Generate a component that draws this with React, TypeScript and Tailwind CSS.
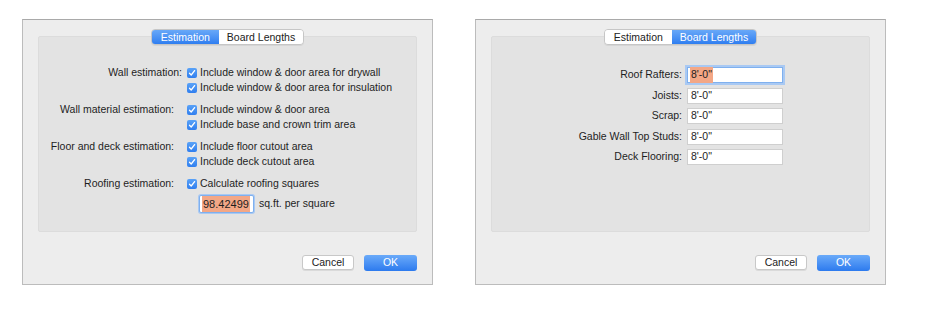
import type { ReactNode } from 'react';

const font = { fontFamily: '"Liberation Sans", Arial, sans-serif' };

function Check() {
  return (
    <span className="flex h-[10px] w-[10px] shrink-0 items-center justify-center rounded-[2px] bg-gradient-to-b from-[#5aa2f7] to-[#2f7eef]">
      <svg width="8" height="8" viewBox="0 0 8 8" fill="none">
        <path d="M1.5 4.3 L3.2 6 L6.6 1.6" stroke="white" strokeWidth="1.3" strokeLinecap="round" strokeLinejoin="round" />
      </svg>
    </span>
  );
}

function Option({ children }: { children: ReactNode }) {
  return (
    <div className="flex h-[15px] items-center gap-[3px]">
      <Check />
      <span>{children}</span>
    </div>
  );
}

function Tabs({ active }: { active: 0 | 1 }) {
  const on = 'bg-gradient-to-b from-[#68a8f8] to-[#2f7ef0] text-white';
  const off = 'bg-white text-[#222]';
  return (
    <div className="-mt-[8px] flex justify-center">
      <div className="flex h-[16px] overflow-hidden rounded-[4px] border border-[#c6c6c6] text-[10.5px] leading-none shadow-[0_1px_0_rgba(0,0,0,0.06)]">
        <div className={`flex items-center px-[9px] ${active === 0 ? on : off}`}>Estimation</div>
        <div className={`flex items-center px-[8px] ${active === 1 ? on : off}`}>Board Lengths</div>
      </div>
    </div>
  );
}

function Buttons() {
  return (
    <div className="mt-[23px] flex justify-end gap-[10px] text-[10.5px]">
      <div className="flex h-[15px] w-[52px] items-center justify-center rounded-[3px] border border-[#c8c8c8] bg-white text-[#222] shadow-[0_1px_0_rgba(0,0,0,0.08)]">
        Cancel
      </div>
      <div className="flex h-[16px] w-[53px] items-center justify-center rounded-[3px] bg-gradient-to-b from-[#6aaaf9] to-[#2c7aee] text-white">
        OK
      </div>
    </div>
  );
}

function Window({ active, children }: { active: 0 | 1; children: ReactNode }) {
  return (
    <div className="h-[266px] w-[411px] border border-[#bcbcbc] border-t-[#a9a9a9] bg-[#ededed] px-[15px] pt-[16px]">
      <div className="h-[196px] rounded-[2px] border border-[#dcdcdc] bg-[#e3e3e3]">
        <Tabs active={active} />
        {children}
      </div>
      <Buttons />
    </div>
  );
}

function EstimationGroup({ label, labelPad, options }: { label: string; labelPad: string; options: ReactNode[] }) {
  return (
    <div className="flex">
      <div className={`flex h-[15px] w-[148px] shrink-0 items-center justify-end ${labelPad}`}>{label}</div>
      <div className="flex flex-col">
        {options.map((o, i) => (
          <Option key={i}>{o}</Option>
        ))}
      </div>
    </div>
  );
}

function LengthRow({ label, focused }: { label: string; focused?: boolean }) {
  return (
    <div className="flex items-center">
      <div className="w-[195px] shrink-0 pr-[5px] text-right">{label}</div>
      <div
        className={`flex h-[16px] w-[96px] items-center border bg-white pl-[2px] ${
          focused ? 'border-[#7fb0ee] shadow-[0_0_0_2px_#a9c9f3]' : 'border-[#cfcfcf]'
        }`}
      >
        <span className={focused ? 'bg-[#f3a786] px-[1px]' : 'px-[1px]'}>8'-0"</span>
      </div>
    </div>
  );
}

export default function App() {
  return (
    <div className="h-[320px] w-[944px] bg-white text-[10.5px] text-[#1e1e1e]" style={font}>
      <div className="flex gap-[42px] pl-[22px] pt-[19px]">
        <Window active={0}>
          <div className="mt-[20px] flex flex-col gap-[7px]">
            <EstimationGroup
              label="Wall estimation:"
              labelPad="pr-[5px]"
              options={['Include window & door area for drywall', 'Include window & door area for insulation']}
            />
            <EstimationGroup
              label="Wall material estimation:"
              labelPad="pr-[13px]"
              options={['Include window & door area', 'Include base and crown trim area']}
            />
            <EstimationGroup
              label="Floor and deck estimation:"
              labelPad="pr-[13px]"
              options={['Include floor cutout area', 'Include deck cutout area']}
            />
            <div>
              <EstimationGroup label="Roofing estimation:" labelPad="pr-[13px]" options={['Calculate roofing squares']} />
              <div className="mt-[4px] flex items-center gap-[5px] pl-[160px]">
                <div className="flex h-[18px] w-[55px] items-center rounded-[2px] border border-[#7fb0ee] bg-white pl-[2px] shadow-[0_0_0_1px_#a9c9f3]">
                  <span className="bg-[#f3a786] px-[1px] text-[11px]">98.42499</span>
                </div>
                <span>sq.ft. per square</span>
              </div>
            </div>
          </div>
        </Window>
        <Window active={1}>
          <div className="mt-[22px] flex flex-col gap-[4.5px]">
            <LengthRow label="Roof Rafters:" focused />
            <LengthRow label="Joists:" />
            <LengthRow label="Scrap:" />
            <LengthRow label="Gable Wall Top Studs:" />
            <LengthRow label="Deck Flooring:" />
          </div>
        </Window>
      </div>
    </div>
  );
}
